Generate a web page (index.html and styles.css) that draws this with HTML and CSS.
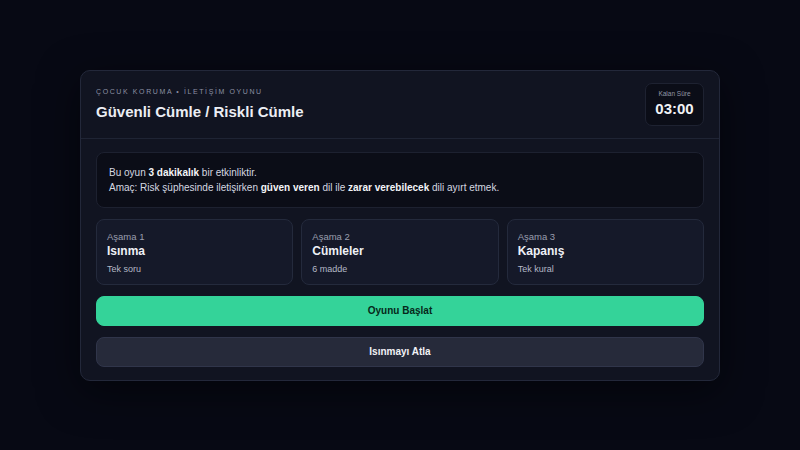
FILE: index.html
```html
<!DOCTYPE html>
<html lang="tr">
<head>
    <meta charset="UTF-8">
    <meta name="viewport" content="width=device-width, initial-scale=1.0">
    <title>Güvenli Cümle / Riskli Cümle</title>
    <link rel="stylesheet" href="styles.css">
</head>
<body>
    <div class="game-card">
        <!-- Header -->
        <div class="game-header">
            <div class="heading">
                <div class="eyebrow">Çocuk Koruma • İletişim Oyunu</div>
                <h1>Güvenli Cümle / Riskli Cümle</h1>
            </div>
            <div class="timer">
                <div class="timer-label">Kalan Süre</div>
                <div class="timer-value">03:00</div>
            </div>
        </div>

        <!-- Body -->
        <div class="game-body">
            <div class="intro">
                <p>Bu oyun <strong>3 dakikalık</strong> bir etkinliktir.</p>
                <p>Amaç: Risk şüphesinde iletişirken <strong>güven veren</strong> dil ile <strong>zarar verebilecek</strong> dili ayırt etmek.</p>
            </div>

            <div class="stages">
                <div class="stage">
                    <div class="stage-step">Aşama 1</div>
                    <div class="stage-title">Isınma</div>
                    <div class="stage-note">Tek soru</div>
                </div>
                <div class="stage">
                    <div class="stage-step">Aşama 2</div>
                    <div class="stage-title">Cümleler</div>
                    <div class="stage-note">6 madde</div>
                </div>
                <div class="stage">
                    <div class="stage-step">Aşama 3</div>
                    <div class="stage-title">Kapanış</div>
                    <div class="stage-note">Tek kural</div>
                </div>
            </div>

            <button class="btn btn-primary">Oyunu Başlat</button>
            <button class="btn btn-secondary">Isınmayı Atla</button>
        </div>
    </div>
</body>
</html>
```

FILE: styles.css
```css
/* General Styles */
body {
    font-family: 'Liberation Sans', Arial, sans-serif;
    background-color: #070914;
    color: #e6e8ef;
    margin: 0;
    padding: 0;
    min-height: 100vh;
    display: flex;
    justify-content: center;
    align-items: center;
}

.game-card {
    width: 640px;
    background-color: #111421;
    border: 1px solid #23283a;
    border-radius: 10px;
    box-shadow: 0 10px 40px rgba(0, 0, 0, 0.5);
    box-sizing: border-box;
}

/* Header */
.game-header {
    display: flex;
    justify-content: space-between;
    align-items: center;
    padding: 12px 15px;
    border-bottom: 1px solid #1f2434;
}

.eyebrow {
    font-size: 7px;
    letter-spacing: 1.6px;
    text-transform: uppercase;
    color: #8c91a3;
    margin-bottom: 8px;
}

h1 {
    font-size: 15px;
    font-weight: 700;
    color: #eceef4;
    margin: 0;
}

.timer {
    background-color: #0b0d17;
    border: 1px solid #1e2231;
    border-radius: 7px;
    width: 59px;
    height: 43px;
    box-sizing: border-box;
    text-align: center;
    padding-top: 6px;
}

.timer-label {
    font-size: 6.5px;
    color: #9296a6;
    margin-bottom: 3px;
}

.timer-value {
    font-size: 15px;
    font-weight: 700;
    color: #f1f2f6;
}

/* Body */
.game-body {
    display: flex;
    flex-direction: column;
    gap: 11px;
    padding: 13px 15px;
}

.intro {
    background-color: #0b0d17;
    border: 1px solid #1d2130;
    border-radius: 8px;
    padding: 12px;
    font-size: 10px;
    color: #d5d8e1;
}

.intro p {
    margin: 0;
    line-height: 15px;
}

.intro strong {
    color: #f3f4f8;
}

.stages {
    display: grid;
    grid-template-columns: repeat(3, 1fr);
    gap: 8px;
}

.stage {
    background-color: #151929;
    border: 1px solid #242a3c;
    border-radius: 8px;
    padding: 11px 10px 10px;
    height: 66px;
    box-sizing: border-box;
}

.stage-step {
    font-size: 9.5px;
    color: #9a9eae;
    margin-bottom: 2px;
}

.stage-title {
    font-size: 12px;
    font-weight: 700;
    color: #eef0f5;
    margin-bottom: 6px;
}

.stage-note {
    font-size: 9px;
    color: #b4b8c6;
}

.btn {
    font-family: 'Liberation Sans', Arial, sans-serif;
    font-size: 10px;
    font-weight: 700;
    border-radius: 8px;
    height: 30px;
    cursor: pointer;
    width: 100%;
}

.btn-primary {
    background-color: #34d399;
    border: 1px solid #34d399;
    color: #06281a;
}

.btn-secondary {
    background-color: #262a3a;
    border: 1px solid #30354a;
    color: #f1f2f6;
}
```
